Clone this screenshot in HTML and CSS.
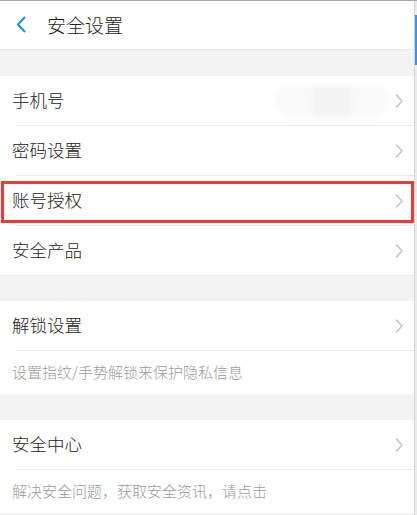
FILE: index.html
```html
<!DOCTYPE html>
<html lang="zh-CN">
<head>
  <meta charset="UTF-8" />
  <meta name="viewport" content="width=device-width, initial-scale=1.0" />
  <title>安全设置</title>
  <link rel="stylesheet" href="styles.css">
</head>
<body>
  <div class="page">
    <header class="topbar">
      <svg class="back" width="11" height="17" viewBox="0 0 11 17"><polyline points="9,1 2,8.5 9,16" fill="none" stroke="#1b8ee3" stroke-width="2"/></svg>
      <h1>安全设置</h1>
    </header>

    <div class="gap"></div>
    <ul class="group">
      <li class="row">
        <span class="label">手机号</span>
        <span class="masked"><i></i><i></i><i></i></span>
        <svg class="arrow" width="10" height="16" viewBox="0 0 10 16"><polyline points="2,1.5 8,8 2,14.5" fill="none" stroke="#c2c2c2" stroke-width="1.4"/></svg>
      </li>
      <li class="row">
        <span class="label">密码设置</span>
        <svg class="arrow" width="10" height="16" viewBox="0 0 10 16"><polyline points="2,1.5 8,8 2,14.5" fill="none" stroke="#c2c2c2" stroke-width="1.4"/></svg>
      </li>
      <li class="row marked">
        <span class="label">账号授权</span>
        <svg class="arrow" width="10" height="16" viewBox="0 0 10 16"><polyline points="2,1.5 8,8 2,14.5" fill="none" stroke="#c2c2c2" stroke-width="1.4"/></svg>
      </li>
      <li class="row last">
        <span class="label">安全产品</span>
        <svg class="arrow" width="10" height="16" viewBox="0 0 10 16"><polyline points="2,1.5 8,8 2,14.5" fill="none" stroke="#c2c2c2" stroke-width="1.4"/></svg>
      </li>
    </ul>

    <div class="gap"></div>
    <ul class="group">
      <li class="row">
        <span class="label">解锁设置</span>
        <svg class="arrow" width="10" height="16" viewBox="0 0 10 16"><polyline points="2,1.5 8,8 2,14.5" fill="none" stroke="#c2c2c2" stroke-width="1.4"/></svg>
      </li>
      <li class="note">设置指纹/手势解锁来保护隐私信息</li>
    </ul>

    <div class="gap"></div>
    <ul class="group">
      <li class="row">
        <span class="label">安全中心</span>
        <svg class="arrow" width="10" height="16" viewBox="0 0 10 16"><polyline points="2,1.5 8,8 2,14.5" fill="none" stroke="#c2c2c2" stroke-width="1.4"/></svg>
      </li>
      <li class="note">解决安全问题，获取安全资讯，请点击</li>
    </ul>
  </div>
  <div class="edge"><span class="edge-blue"></span></div>
</body>
</html>
```

FILE: styles.css
```css
html, body {
  margin: 0;
  padding: 0;
}
body {
  display: flex;
  height: 515px;
  overflow: hidden;
  background: #fff;
  font-family: "Noto Sans CJK SC", "Noto Sans", sans-serif;
  font-weight: 300;
  color: #333;
  border-top: 1px solid #a9a9a9;
  box-sizing: border-box;
}
.page {
  width: 414px;
  flex: none;
  background: #f3f3f3;
}
.edge {
  flex: 1;
  border-left: 1px solid #d4d4d4;
  background: #ececec;
  padding-top: 14px;
}
.edge-blue {
  display: block;
  height: 50px;
  background: #3b93e4;
}
.topbar {
  height: 49px;
  background: #fff;
  border-bottom: 1px solid #e8e8e8;
  display: flex;
  align-items: center;
  padding: 0 0 2px 16px;
  box-sizing: border-box;
}
.back {
  margin-right: 20px;
}
h1 {
  margin: 0;
  font-size: 19px;
  font-weight: 300;
  color: #1e1e1e;
}
.gap {
  height: 26px;
}
.group {
  list-style: none;
  margin: 0;
  padding: 0;
  background: #fff;
}
.row {
  position: relative;
  height: 49px;
  display: flex;
  align-items: center;
  padding: 0 10px 3px 12px;
  box-sizing: border-box;
}
.row::before {
  content: "";
  position: absolute;
  left: 16px;
  right: 0;
  bottom: -1px;
  height: 1px;
  background: #ececec;
}
.row.last::before {
  left: 0;
}
.row + .row,
.row + .note {
  margin-top: 1px;
}
.label {
  font-size: 17.5px;
  color: #222;
  flex: 1;
}
.arrow {
  flex: none;
  margin-top: 3px;
}
.masked {
  display: flex;
  width: 112px;
  height: 32px;
  margin: 3px 6px 0 0;
  border-radius: 14px;
  background: #fafafa;
  filter: blur(2px);
  overflow: hidden;
}
.masked i {
  flex: 1;
  background: #fafafa;
}
.masked i:nth-child(2) {
  background: #f3f3f3;
}
.marked::after {
  content: "";
  position: absolute;
  left: 1px;
  right: 0;
  top: 5px;
  bottom: 2px;
  border: 3px solid #ef3a3a;
}
.note {
  height: 43px;
  display: flex;
  align-items: center;
  padding: 0 0 3px 12px;
  box-sizing: border-box;
  font-size: 15px;
  color: #9a9a9a;
}
```
